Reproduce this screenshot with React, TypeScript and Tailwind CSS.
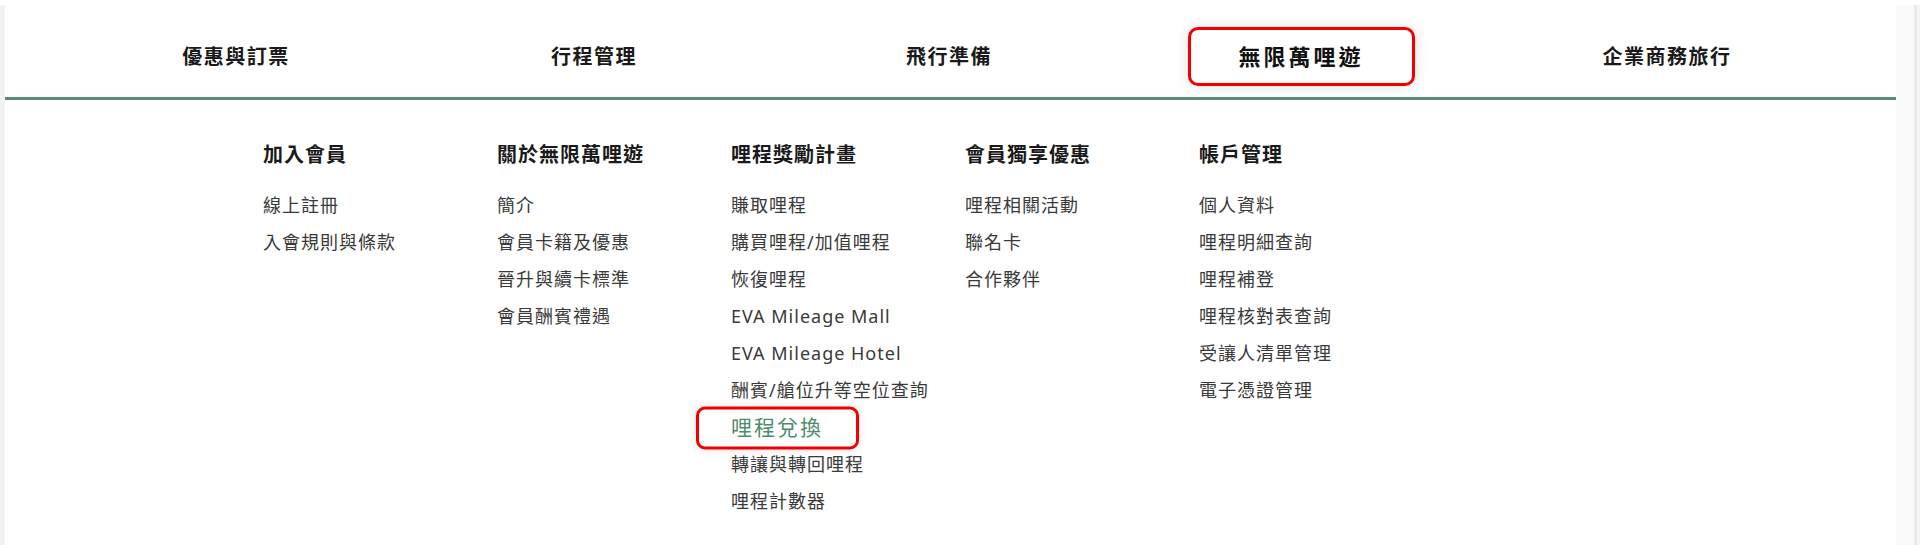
import React from 'react';

const navItems = [
  { label: '優惠與訂票', w: 'w-[358px]' },
  { label: '行程管理', w: 'w-[358px]' },
  { label: '飛行準備', w: 'w-[352px]' },
  { label: '無限萬哩遊', w: 'w-[352px]' },
  { label: '企業商務旅行', w: 'w-[380px]' },
];
const activeNav = '無限萬哩遊';

const columns = [
  { title: '加入會員', links: ['線上註冊', '入會規則與條款'] },
  { title: '關於無限萬哩遊', links: ['簡介', '會員卡籍及優惠', '晉升與續卡標準', '會員酬賓禮遇'] },
  {
    title: '哩程獎勵計畫',
    links: [
      '賺取哩程',
      '購買哩程/加值哩程',
      '恢復哩程',
      'EVA Mileage Mall',
      'EVA Mileage Hotel',
      '酬賓/艙位升等空位查詢',
      '哩程兌換',
      '轉讓與轉回哩程',
      '哩程計數器',
    ],
  },
  { title: '會員獨享優惠', links: ['哩程相關活動', '聯名卡', '合作夥伴'] },
  { title: '帳戶管理', links: ['個人資料', '哩程明細查詢', '哩程補登', '哩程核對表查詢', '受讓人清單管理', '電子憑證管理'] },
];

const hoveredLink = '哩程兌換';

const App = () => {
  return (
    <div
      className="flex h-[545px] w-full bg-white pt-[5px]"
      style={{ fontFamily: '"Noto Sans", "Noto Sans CJK TC", sans-serif' }}
    >
      <div className="w-[5px] bg-[#f2f2f2]" />
      <main className="flex-1 bg-white">
        {/* top nav */}
        <nav className="flex h-[92px] items-end pb-[11px] pl-[52px]">
          {navItems.map((item) => (
            <div key={item.label} className={`flex justify-center ${item.w}`}>
              {item.label === activeNav ? (
                <a className="flex h-[59px] w-[227px] items-center justify-center rounded-[10px] border-[3px] border-[#f20000] bg-white text-[22px] font-bold tracking-[3px] text-[#111] shadow-[0_0_14px_rgba(0,0,0,0.12)]">
                  {item.label}
                </a>
              ) : (
                <a className="flex h-[59px] items-center text-[20px] font-bold tracking-[1.5px] text-[#1a1a1a]">
                  {item.label}
                </a>
              )}
            </div>
          ))}
        </nav>
        <div className="h-[3px] bg-[#5b8a76]" />

        {/* mega menu */}
        <div className="flex pl-[258px] pt-[41px]">
          {columns.map((col) => (
            <div key={col.title} className="w-[234px]">
              <h3 className="mb-[18px] text-[20px] font-bold leading-[28px] tracking-[1px] text-[#1a1a1a]">
                {col.title}
              </h3>
              <ul>
                {col.links.map((link) => (
                  <li key={link} className="h-[37px] leading-[37px]">
                    {link === hoveredLink ? (
                      <span className="relative inline-block text-[21px] tracking-[2px] text-[#4f8a6f]">
                        {link}
                        <span className="pointer-events-none absolute -left-[35px] -right-[36px] top-1/2 h-[43px] -translate-y-1/2 rounded-[9px] border-[3px] border-[#f20000] shadow-[0_0_8px_rgba(0,0,0,0.12)]" />
                      </span>
                    ) : (
                      <a className="text-[18px] tracking-[1px] text-[#3a3a3a]">{link}</a>
                    )}
                  </li>
                ))}
              </ul>
            </div>
          ))}
        </div>
      </main>
      <div className="w-[18px] bg-[#fbfbfb]" />
      <div className="w-[3px] bg-[#ebebeb]" />
      <div className="w-[3px] bg-[#f5f5f5]" />
    </div>
  );
};

export default App;
